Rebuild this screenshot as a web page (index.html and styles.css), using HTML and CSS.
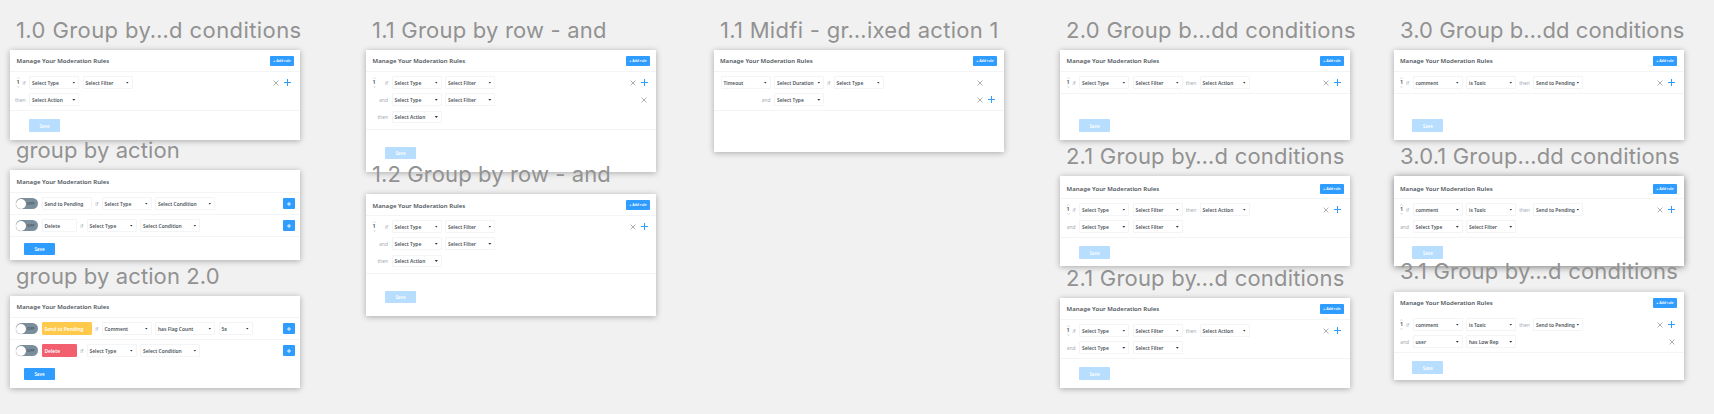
FILE: index.html
```html
<!DOCTYPE html>
<html lang="en">
<head>
<meta charset="utf-8">
<title>Moderation rules artboards</title>
<link rel="stylesheet" href="styles.css">
</head>
<body>
<svg class="defs" width="0" height="0">
  <symbol id="remove" viewBox="0 0 6 6"><path d="M.6.6 5.4 5.4M5.4.6.6 5.4"/></symbol>
  <symbol id="plus" viewBox="0 0 7 7"><path d="M3.5 0V7M0 3.5H7"/></symbol>
  <symbol id="up" viewBox="0 0 3 2"><path d="M.3 1.7 1.5.5 2.7 1.7"/></symbol>
  <symbol id="down" viewBox="0 0 3 2"><path d="M.3.3 1.5 1.5 2.7.3"/></symbol>
</svg>
<main class="canvas">

<section class="artboard a10">
  <h2 class="label">1.0 Group by…d conditions</h2>
  <div class="panel">
    <header class="head"><h3>Manage Your Moderation Rules</h3><button class="add">+ Add rule</button></header>
    <div class="rules">
      <div class="row"><span class="step"><svg><use href="#up"/></svg>1<svg><use href="#down"/></svg></span><span class="pre">if</span><span class="select">Select Type</span><span class="select">Select Filter</span><span class="tools"><svg class="x"><use href="#remove"/></svg><svg class="p"><use href="#plus"/></svg></span></div>
      <div class="row"><span class="pre">then</span><span class="select">Select Action</span></div>
    </div>
    <button class="save pale">Save</button>
  </div>
</section>

<section class="artboard ga1">
  <h2 class="label">group by action</h2>
  <div class="panel">
    <header class="head"><h3>Manage Your Moderation Rules</h3></header>
    <div class="line"><span class="toggle">OFF</span><span class="box wide">Send to Pending</span><span class="if">if</span><span class="select">Select Type</span><span class="select cond">Select Condition</span><button class="more"><svg><use href="#plus"/></svg></button></div>
    <div class="line"><span class="toggle">OFF</span><span class="box">Delete</span><span class="if">if</span><span class="select">Select Type</span><span class="select cond">Select Condition</span><button class="more"><svg><use href="#plus"/></svg></button></div>
    <button class="save">Save</button>
  </div>
</section>

<section class="artboard ga2">
  <h2 class="label">group by action 2.0</h2>
  <div class="panel">
    <header class="head"><h3>Manage Your Moderation Rules</h3></header>
    <div class="line"><span class="toggle">OFF</span><span class="box wide amber">Send to Pending</span><span class="if">if</span><span class="select">Comment</span><span class="select cond">has Flag Count</span><span class="select count">5x</span><button class="more"><svg><use href="#plus"/></svg></button></div>
    <div class="line last"><span class="toggle">OFF</span><span class="box red">Delete</span><span class="if">if</span><span class="select">Select Type</span><span class="select cond">Select Condition</span><button class="more"><svg><use href="#plus"/></svg></button></div>
    <button class="save">Save</button>
  </div>
</section>

<section class="artboard a11 indent">
  <h2 class="label">1.1 Group by row - and</h2>
  <div class="panel">
    <header class="head"><h3>Manage Your Moderation Rules</h3><button class="add">+ Add rule</button></header>
    <div class="rules">
      <div class="row"><span class="step"><svg><use href="#up"/></svg>1<svg><use href="#down"/></svg></span><span class="pre">if</span><span class="select">Select Type</span><span class="select">Select Filter</span><span class="tools"><svg class="x"><use href="#remove"/></svg><svg class="p"><use href="#plus"/></svg></span></div>
      <div class="row"><span class="pre">and</span><span class="select">Select Type</span><span class="select">Select Filter</span><span class="tools"><svg class="x"><use href="#remove"/></svg></span></div>
      <div class="row"><span class="pre">then</span><span class="select">Select Action</span></div>
    </div>
    <button class="save pale">Save</button>
  </div>
</section>

<section class="artboard a12 indent">
  <h2 class="label">1.2 Group by row - and</h2>
  <div class="panel">
    <header class="head"><h3>Manage Your Moderation Rules</h3><button class="add">+ Add rule</button></header>
    <div class="rules">
      <div class="row"><span class="step"><svg><use href="#up"/></svg>1<svg><use href="#down"/></svg></span><span class="pre">if</span><span class="select">Select Type</span><span class="select">Select Filter</span><span class="tools"><svg class="x"><use href="#remove"/></svg><svg class="p"><use href="#plus"/></svg></span></div>
      <div class="row"><span class="pre">and</span><span class="select">Select Type</span><span class="select">Select Filter</span></div>
      <div class="row"><span class="pre">then</span><span class="select">Select Action</span></div>
    </div>
    <button class="save pale">Save</button>
  </div>
</section>

<section class="artboard mid">
  <h2 class="label">1.1 Midfi - gr…ixed action 1</h2>
  <div class="panel">
    <header class="head"><h3>Manage Your Moderation Rules</h3><button class="add">+ Add rule</button></header>
    <div class="rules">
      <div class="row first"><span class="select">Timeout</span><span class="select">Select Duration</span><span class="if">if</span><span class="select">Select Type</span><span class="tools solo"><svg class="x"><use href="#remove"/></svg></span></div>
      <div class="row"><span class="pre">and</span><span class="select">Select Type</span><span class="tools"><svg class="x"><use href="#remove"/></svg><svg class="p"><use href="#plus"/></svg></span></div>
    </div>
  </div>
</section>

<section class="artboard a20">
  <h2 class="label">2.0 Group b…dd conditions</h2>
  <div class="panel">
    <header class="head"><h3>Manage Your Moderation Rules</h3><button class="add">+ Add rule</button></header>
    <div class="rules">
      <div class="row"><span class="step"><svg><use href="#up"/></svg>1<svg><use href="#down"/></svg></span><span class="pre">if</span><span class="select">Select Type</span><span class="select">Select Filter</span><span class="then">then</span><span class="select">Select Action</span><span class="tools"><svg class="x"><use href="#remove"/></svg><svg class="p"><use href="#plus"/></svg></span></div>
    </div>
    <button class="save pale">Save</button>
  </div>
</section>

<section class="artboard a21">
  <h2 class="label">2.1 Group by…d conditions</h2>
  <div class="panel">
    <header class="head"><h3>Manage Your Moderation Rules</h3><button class="add">+ Add rule</button></header>
    <div class="rules">
      <div class="row"><span class="step"><svg><use href="#up"/></svg>1<svg><use href="#down"/></svg></span><span class="pre">if</span><span class="select">Select Type</span><span class="select">Select Filter</span><span class="then">then</span><span class="select">Select Action</span><span class="tools"><svg class="x"><use href="#remove"/></svg><svg class="p"><use href="#plus"/></svg></span></div>
      <div class="row"><span class="pre">and</span><span class="select">Select Type</span><span class="select">Select Filter</span></div>
    </div>
    <button class="save pale">Save</button>
  </div>
</section>

<section class="artboard a21b">
  <h2 class="label">2.1 Group by…d conditions</h2>
  <div class="panel">
    <header class="head"><h3>Manage Your Moderation Rules</h3><button class="add">+ Add rule</button></header>
    <div class="rules">
      <div class="row"><span class="step"><svg><use href="#up"/></svg>1<svg><use href="#down"/></svg></span><span class="pre">if</span><span class="select">Select Type</span><span class="select">Select Filter</span><span class="then">then</span><span class="select">Select Action</span><span class="tools"><svg class="x"><use href="#remove"/></svg><svg class="p"><use href="#plus"/></svg></span></div>
      <div class="row"><span class="pre">and</span><span class="select">Select Type</span><span class="select">Select Filter</span></div>
    </div>
    <button class="save pale">Save</button>
  </div>
</section>

<section class="artboard a30 near">
  <h2 class="label">3.0 Group b…dd conditions</h2>
  <div class="panel">
    <header class="head"><h3>Manage Your Moderation Rules</h3><button class="add">+ Add rule</button></header>
    <div class="rules">
      <div class="row"><span class="step"><svg><use href="#up"/></svg>1<svg><use href="#down"/></svg></span><span class="pre">if</span><span class="select">comment</span><span class="select">is Toxic</span><span class="then">then</span><span class="select">Send to Pending</span><span class="tools"><svg class="x"><use href="#remove"/></svg><svg class="p"><use href="#plus"/></svg></span></div>
    </div>
    <button class="save pale">Save</button>
  </div>
</section>

<section class="artboard a301 near">
  <h2 class="label">3.0.1 Group…dd conditions</h2>
  <div class="panel">
    <header class="head"><h3>Manage Your Moderation Rules</h3><button class="add">+ Add rule</button></header>
    <div class="rules">
      <div class="row"><span class="step"><svg><use href="#up"/></svg>1<svg><use href="#down"/></svg></span><span class="pre">if</span><span class="select">comment</span><span class="select">is Toxic</span><span class="then">then</span><span class="select">Send to Pending</span><span class="tools"><svg class="x"><use href="#remove"/></svg><svg class="p"><use href="#plus"/></svg></span></div>
      <div class="row"><span class="pre">and</span><span class="select">Select Type</span><span class="select">Select Filter</span></div>
    </div>
    <button class="save pale">Save</button>
  </div>
</section>

<section class="artboard a31 near">
  <h2 class="label">3.1 Group by…d conditions</h2>
  <div class="panel">
    <header class="head"><h3>Manage Your Moderation Rules</h3><button class="add">+ Add rule</button></header>
    <div class="rules">
      <div class="row"><span class="step"><svg><use href="#up"/></svg>1<svg><use href="#down"/></svg></span><span class="pre">if</span><span class="select">comment</span><span class="select">is Toxic</span><span class="then">then</span><span class="select">Send to Pending</span><span class="tools"><svg class="x"><use href="#remove"/></svg><svg class="p"><use href="#plus"/></svg></span></div>
      <div class="row"><span class="pre">and</span><span class="select">user</span><span class="select">has Low Rep</span><span class="tools"><svg class="x"><use href="#remove"/></svg></span></div>
    </div>
    <button class="save pale">Save</button>
  </div>
</section>

</main>
</body>
</html>
```
FILE: styles.css
```css
* { box-sizing: border-box; }
body { margin: 0; background: #f1f1f1; }
.defs { position: absolute; }
.canvas {
  position: relative;
  width: 1714px;
  height: 414px;
  overflow: hidden;
  background: #f1f1f1;
  font: 600 4.9px/6px "Noto Sans", "Open Sans", sans-serif;
  color: #4d545b;
}
h2, h3 { margin: 0; }
button { border: 0; padding: 0; font: inherit; color: #fff; background: #2f9dff; border-radius: 1px; }

/* Artboards placed freely on the canvas */
.artboard { position: absolute; width: 290px; }
.a10  { left: 10px;   top: 15px;  --track: .41px; }
.ga1  { left: 10px;   top: 135px; --track: .09px; }
.ga2  { left: 10px;   top: 261px; --track: .1px; }
.a11  { left: 366px;  top: 15px;  --track: .2px; }
.a12  { left: 366px;  top: 159px; --track: .1px; }
.mid  { left: 714px;  top: 15px;  --track: .29px; }
.a20  { left: 1060px; top: 15px;  --track: .28px; }
.a21  { left: 1060px; top: 141px; --track: .2px; }
.a21b { left: 1060px; top: 263px; --track: .2px; }
.a30  { left: 1394px; top: 15px;  --track: .07px; }
.a301 { left: 1394px; top: 141px; --track: .16px; }
.a31  { left: 1394px; top: 256px; --track: .19px; }

.label {
  height: 35px;
  padding-left: 6px;
  font: 400 22px/30px Inter, sans-serif;
  letter-spacing: var(--track);
  color: #929292;
  white-space: nowrap;
}
.a31 .label { height: 36px; }
.panel {
  display: flex;
  flex-direction: column;
  align-items: stretch;
  height: 90px;
  background: #fff;
  box-shadow: 0 1px 6px rgba(0, 0, 0, .3);
}
.a11 .panel, .a12 .panel { height: 122px; }
.mid .panel { height: 102px; }
.ga2 .panel { height: 92px; }
.a31 .panel { height: 88px; }
.a301 .panel { box-shadow: 0 1px 7px rgba(0, 0, 0, .5); }

.head {
  display: flex;
  align-items: center;
  justify-content: space-between;
  height: 22px;
  flex: none;
  padding: 0 6px 0 6.6px;
  border-bottom: 1px solid #f3f4f5;
}
.near .head, .mid .head { padding-left: 6px; padding-right: 7px; }
.a21 .head, .a301 .head { height: 23px; padding-top: 3px; }
.ga1 .head { height: 23px; }
.a12 .head { padding-top: 1px; }
.a31 .head { border-color: transparent; }
.head h3 { padding-top: 1px; font-size: 6px; font-weight: 600; line-height: 8px; letter-spacing: .03px; white-space: nowrap; }
.add { width: 24px; height: 10px; font-size: 3.5px; line-height: 10px; white-space: nowrap; }

.rules {
  display: flex;
  flex-direction: column;
  gap: 4.7px;
  padding: 4.3px 6.5px 4px 0;
  border-bottom: 1px solid #f3f4f5;
}
.row { display: flex; align-items: center; height: 12.5px; }
.pre { width: 15.5px; margin-right: 3.5px; text-align: right; color: #a3abb2; font-weight: 400; }
.step + .pre { width: 6px; }
.step {
  display: flex;
  flex-direction: column;
  align-items: center;
  width: 3px;
  margin-left: 6.5px;
  line-height: 7px;
  font-size: 5.5px;
}
.step svg { flex: none; width: 3px; height: 2px; stroke: #b3b3b3; stroke-width: .5; fill: none; }
.indent .pre { width: 22px; }
.indent .step + .pre { width: 12.5px; }
.select, .box {
  display: flex;
  align-items: center;
  justify-content: space-between;
  flex: none;
  width: 50px;
  height: 12.5px;
  padding: 0 2.5px 0 2px;
  border: 1px solid #f3f4f5;
  border-radius: 1px;
  white-space: nowrap;
}
.select::after {
  content: "";
  width: 3.4px;
  height: 2px;
  background: #33383d;
  clip-path: polygon(0 0, 100% 0, 50% 100%);
}
.select + .select { margin-left: 3.5px; }
.if, .then { color: #a3abb2; font-weight: 400; width: 9.5px; text-align: center; }
.then { width: 17px; }
.tools { display: flex; align-items: center; gap: 5px; margin-left: auto; padding-right: 2.5px; }
.tools svg { fill: none; }
.x { width: 6px; height: 6px; stroke: #8d8d8d; stroke-width: .7; }
.p { width: 7px; height: 7px; stroke: #2f9dff; stroke-width: 1; }
.row .x:last-child { margin-right: .5px; }
.indent .rules { padding-right: 6px; padding-bottom: 5.5px; }
.near .step { margin-left: 6px; }
.near .pre { width: 15px; }
.near .step + .pre { width: 6px; }
.mid .first { padding-left: 6.5px; }
.mid .pre { width: 56.5px; }
.mid .solo { padding-right: 14.5px; }

.save {
  flex: none;
  width: 31px;
  height: 12.5px;
  margin: 8.5px 0 0 19px;
  line-height: 12px;
  font-size: 4.5px;
}
.pale { background: #b7ddff; }
.near .save { margin-left: 18.3px; }
.a20 .save, .a30 .save { margin-top: 25.5px; }
.indent .save { margin-top: 17.3px; }

/* Boards grouped by action */
.line { display: flex; align-items: center; flex: none; height: 22px; padding: 0 5.5px; border-bottom: 1px solid #f3f4f5; }
.last { border-color: transparent; }
.toggle {
  display: flex;
  align-items: center;
  width: 22px;
  height: 10.5px;
  margin-right: 4px;
  border-radius: 6px;
  background: #7b8e9c;
  color: #4c5963;
  font-size: 4px;
}
.toggle::before {
  content: "";
  width: 10px;
  height: 10px;
  margin-right: 1.5px;
  border-radius: 50%;
  background: #fff;
  box-shadow: 0 0 1px #777;
}
.box { width: 35.5px; }
.box.wide { width: 50.5px; }
.line .cond { width: 60px; }
.line .count { width: 34px; }
.amber { background: #ffca4b; border-color: #ffca4b; color: #fff; }
.red { background: #f2606f; border-color: #f2606f; color: #fff; }
.more { display: grid; place-items: center; width: 11.5px; height: 11px; margin-left: auto; }
.more svg { width: 4px; height: 4px; fill: none; stroke: #fff; stroke-width: 1.5; }
.ga1 .save, .ga2 .save { margin: 5.5px 0 0 14px; }
```
